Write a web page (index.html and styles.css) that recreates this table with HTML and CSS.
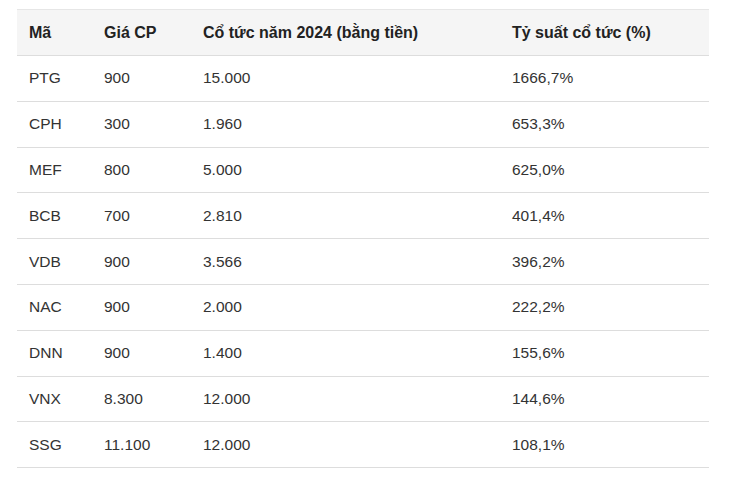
FILE: index.html
```html
<!DOCTYPE html>
<html lang="vi">
<head>
<meta charset="utf-8">
<link rel="stylesheet" href="styles.css">
</head>
<body>
<table class="tbl">
  <colgroup>
    <col class="c1"><col class="c2"><col class="c3"><col class="c4">
  </colgroup>
  <thead>
    <tr><th>Mã</th><th>Giá CP</th><th>Cổ tức năm 2024 (bằng tiền)</th><th>Tỷ suất cổ tức (%)</th></tr>
  </thead>
  <tbody>
    <tr><td>PTG</td><td>900</td><td>15.000</td><td>1666,7%</td></tr>
    <tr><td>CPH</td><td>300</td><td>1.960</td><td>653,3%</td></tr>
    <tr><td>MEF</td><td>800</td><td>5.000</td><td>625,0%</td></tr>
    <tr><td>BCB</td><td>700</td><td>2.810</td><td>401,4%</td></tr>
    <tr><td>VDB</td><td>900</td><td>3.566</td><td>396,2%</td></tr>
    <tr><td>NAC</td><td>900</td><td>2.000</td><td>222,2%</td></tr>
    <tr><td>DNN</td><td>900</td><td>1.400</td><td>155,6%</td></tr>
    <tr><td>VNX</td><td>8.300</td><td>12.000</td><td>144,6%</td></tr>
    <tr><td>SSG</td><td>11.100</td><td>12.000</td><td>108,1%</td></tr>
  </tbody>
</table>
</body>
</html>
```
FILE: styles.css
```css
html, body { margin: 0; padding: 0; background: #fff; }
body { padding: 9px 0 0 17px; font-family: "Liberation Sans", Arial, sans-serif; color: #333; }
.tbl { border-collapse: collapse; table-layout: fixed; width: 692px; font-size: 15.5px; }
.c1 { width: 75px; }
.c2 { width: 99px; }
.c3 { width: 309px; }
.c4 { width: 209px; }
.tbl th, .tbl td { text-align: left; padding: 0 12px; vertical-align: middle; }
.tbl thead tr { height: 46px; }
.tbl th { background: #f5f5f5; font-weight: bold; font-size: 16px; color: #222; border-top: 1px solid #e6e6e6; border-bottom: 1px solid #ddd; }
.tbl tbody tr { height: 45.8px; }
.tbl td { border-bottom: 1px solid #ddd; }
```
